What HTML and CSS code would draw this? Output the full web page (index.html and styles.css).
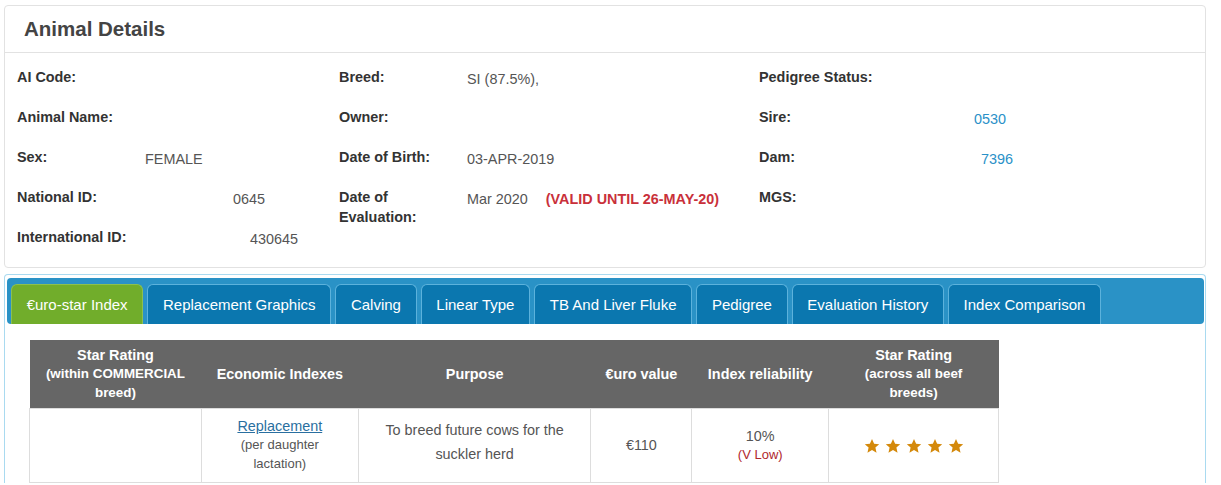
FILE: index.html
```html
<!DOCTYPE html>
<html>
<head>
<meta charset="utf-8">
<link rel="stylesheet" href="styles.css">
</head>
<body>
<div class="card">
  <div class="card-head"><h2>Animal Details</h2></div>
  <div class="details">
    <div class="col col1">
      <div class="row"><span class="lbl">AI Code:</span></div>
      <div class="row"><span class="lbl">Animal Name:</span></div>
      <div class="row"><span class="lbl">Sex:</span><span class="val">FEMALE</span></div>
      <div class="row"><span class="lbl">National ID:</span><span class="val nat">0645</span></div>
      <div class="row"><span class="lbl">International ID:</span><span class="val intl">430645</span></div>
    </div>
    <div class="col col2">
      <div class="row"><span class="lbl">Breed:</span><span class="val">SI (87.5%),</span></div>
      <div class="row"><span class="lbl">Owner:</span></div>
      <div class="row"><span class="lbl">Date of Birth:</span><span class="val">03-APR-2019</span></div>
      <div class="row"><span class="lbl">Date of Evaluation:</span><span class="val">Mar 2020 <span class="valid">(VALID UNTIL 26-MAY-20)</span></span></div>
    </div>
    <div class="col col3">
      <div class="row"><span class="lbl">Pedigree Status:</span></div>
      <div class="row"><span class="lbl wide">Sire:</span><span class="val link">0530</span></div>
      <div class="row"><span class="lbl wide">Dam:</span><span class="val link dam">7396</span></div>
      <div class="row"><span class="lbl">MGS:</span></div>
    </div>
  </div>
</div>

<div class="tabs">
  <ul class="tab-bar">
    <li class="tab active">€uro-star Index</li>
    <li class="tab">Replacement Graphics</li>
    <li class="tab">Calving</li>
    <li class="tab">Linear Type</li>
    <li class="tab">TB And Liver Fluke</li>
    <li class="tab">Pedigree</li>
    <li class="tab">Evaluation History</li>
    <li class="tab">Index Comparison</li>
  </ul>
  <div class="tab-body">
    <table class="idx">
      <thead>
        <tr>
          <th class="c1">Star Rating<br><span class="sub">(within COMMERCIAL breed)</span></th>
          <th class="c2">Economic Indexes</th>
          <th class="c3">Purpose</th>
          <th class="c4">€uro value</th>
          <th class="c5">Index reliability</th>
          <th class="c6">Star Rating<br><span class="sub">(across all beef breeds)</span></th>
        </tr>
      </thead>
      <tbody>
        <tr>
          <td></td>
          <td class="econ"><a class="ilink">Replacement</a><br><span class="small">(per daughter lactation)</span></td>
          <td class="purpose">To breed future cows for the suckler herd</td>
          <td>€110</td>
          <td>10%<br><span class="low">(V Low)</span></td>
          <td class="stars">
            <svg class="star" viewBox="0 0 24 24"><path d="M12 1.5l3.2 7.1 7.6.7-5.7 5.1 1.7 7.6L12 18l-6.8 4 1.7-7.6-5.7-5.1 7.6-.7z"/></svg><svg class="star" viewBox="0 0 24 24"><path d="M12 1.5l3.2 7.1 7.6.7-5.7 5.1 1.7 7.6L12 18l-6.8 4 1.7-7.6-5.7-5.1 7.6-.7z"/></svg><svg class="star" viewBox="0 0 24 24"><path d="M12 1.5l3.2 7.1 7.6.7-5.7 5.1 1.7 7.6L12 18l-6.8 4 1.7-7.6-5.7-5.1 7.6-.7z"/></svg><svg class="star" viewBox="0 0 24 24"><path d="M12 1.5l3.2 7.1 7.6.7-5.7 5.1 1.7 7.6L12 18l-6.8 4 1.7-7.6-5.7-5.1 7.6-.7z"/></svg><svg class="star" viewBox="0 0 24 24"><path d="M12 1.5l3.2 7.1 7.6.7-5.7 5.1 1.7 7.6L12 18l-6.8 4 1.7-7.6-5.7-5.1 7.6-.7z"/></svg>
          </td>
        </tr>
      </tbody>
    </table>
  </div>
</div>
</body>
</html>
```
FILE: styles.css
```css
html, body {
  margin: 0;
  padding: 0;
  background: #fff;
  font-family: "Liberation Sans", Arial, sans-serif;
  color: #333;
}

.card {
  margin: 5px 15px 0 4px;
  border: 1px solid #e2e2e2;
  border-radius: 4px;
  height: 263px;
  box-sizing: border-box;
}

.card-head {
  height: 47px;
  border-bottom: 1px solid #e2e2e2;
  box-sizing: border-box;
  padding-left: 19px;
  display: flex;
  align-items: center;
}

.card-head h2 {
  margin: 0;
  font-size: 20.5px;
  font-weight: bold;
  color: #444;
}

.details {
  display: flex;
  padding: 14px 0 0 12px;
}

.col { display: flex; flex-direction: column; }
.col1 { width: 322px; }
.col2 { width: 420px; }
.col3 { flex: 1; }

.row {
  height: 40px;
  display: flex;
  align-items: flex-start;
  font-size: 14.4px;
  line-height: 20px;
}

.lbl {
  width: 128px;
  flex: none;
  font-weight: bold;
  color: #333;
}
.lbl.wide { width: 215px; }

.val {
  color: #555;
  padding-top: 2px;
}
.val.nat { margin-left: 88px; }
.val.intl { margin-left: 105px; }
.val.link { color: #2a91c8; }
.val.dam { margin-left: 7px; }

.valid {
  color: #c9303a;
  font-weight: bold;
  font-size: 14.4px;
  margin-left: 14px;
}

.tabs {
  margin: 6px 15px 0 4px;
  border: 1px solid #a9daf0;
  border-bottom: none;
  border-radius: 4px 4px 0 0;
  padding: 3px 1px 0 2px;
}

.tab-bar {
  list-style: none;
  margin: 0;
  height: 46px;
  box-sizing: border-box;
  padding: 6px 0 0 4px;
  background: #2a92c6;
  border-radius: 4px;
  display: flex;
  gap: 4px;
}

.tab {
  height: 40px;
  box-sizing: border-box;
  padding: 0 14.7px;
  border: 1px solid #5cb2dc;
  border-bottom: none;
  border-radius: 6px 6px 0 0;
  background: #0b77af;
  color: #fff;
  font-size: 15px;
  line-height: 40px;
  white-space: nowrap;
}

.tab.active {
  background: #71ad2b;
  border-color: #8cc04e;
}

.tab-body {
  padding: 16px 0 0 22px;
}

.idx {
  border-collapse: collapse;
  width: 970px;
  font-size: 14px;
  text-align: center;
}

.idx th {
  background: #666;
  color: #fff;
  font-weight: bold;
  height: 68px;
  padding: 0 12px;
  box-sizing: border-box;
  line-height: 18px;
  font-size: 14.4px;
}

.idx th .sub { font-size: 13.4px; }

.c1 { width: 172px; }
.c2 { width: 157px; }
.c3 { width: 233px; }
.c4 { width: 101px; }
.c5 { width: 137px; }
.c6 { width: 170px; }

.idx td {
  border: 1px solid #ddd;
  height: 67px;
  color: #555;
  padding: 0 8px;
  line-height: 18px;
  font-size: 14.4px;
}

.idx td.econ { padding: 0 22px; }

.ilink {
  color: #2a6fa0;
  text-decoration: underline;
  font-size: 14.4px;
}

.small { font-size: 13px; color: #555; }

.idx td.purpose { line-height: 24px; padding-bottom: 6px; }

.low { color: #b0272d; font-size: 13px; }

.star {
  width: 16px;
  height: 16px;
  fill: #d4890b;
  margin: 0 2.5px;
  vertical-align: middle;
}
```
